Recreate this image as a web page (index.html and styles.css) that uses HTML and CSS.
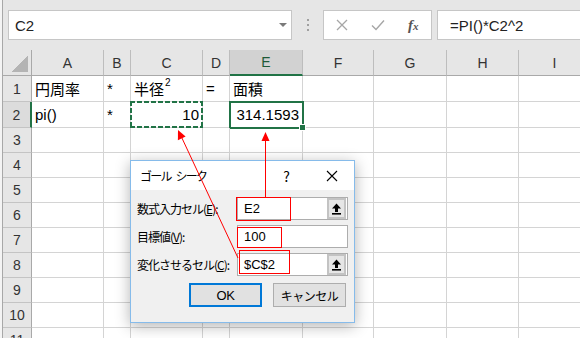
FILE: index.html
```html
<!DOCTYPE html>
<html lang="ja">
  <head>
    <meta charset="UTF-8" />
    <meta name="viewport" content="width=device-width, initial-scale=1.0" />
    <title>ゴール シーク</title>
    <link rel="stylesheet" href="styles.css">
  </head>

  <body>
    <div class="app">
      <div class="formula-bar">
        <div class="name-box"><span>C2</span><i class="drop"></i></div>
        <div class="grip"><b></b><b></b><b></b></div>
        <div class="fx-buttons">
          <span class="fx-btn">
            <svg width="12" height="12" viewBox="0 0 12 12"><path d="M1 1L11 11M11 1L1 11" stroke="#a6a6a6" stroke-width="1.3" fill="none" /></svg>
          </span>
          <span class="fx-btn">
            <svg width="14" height="12" viewBox="0 0 14 12"><path d="M1 6.5L5 10.5L13 1.5" stroke="#a6a6a6" stroke-width="1.4" fill="none" /></svg>
          </span>
          <span class="fx-btn fx"><i>f<small>x</small></i></span>
        </div>
        <div class="formula">=PI()*C2^2</div>
      </div>

      <div class="sheet">
        <div class="row head">
          <div class="corner"></div><div>A</div><div>B</div><div>C</div><div>D</div><div class="on">E</div><div>F</div><div>G</div><div>H</div><div>I</div>
        </div>
        <div class="row tall">
          <div class="rh">1</div><div>円周率</div><div>*</div><div>半径<sup>2</sup></div><div>=</div><div>面積</div><div></div><div></div><div></div><div></div>
        </div>
        <div class="row tall">
          <div class="rh on">2</div><div>pi()</div><div>*</div><div class="num copy">10</div><div></div><div class="num active">314.1593</div><div></div><div></div><div></div><div></div>
        </div>
        <div class="row"><div class="rh">3</div><div></div><div></div><div></div><div></div><div></div><div></div><div></div><div></div><div></div></div>
        <div class="row"><div class="rh">4</div><div></div><div></div><div></div><div></div><div></div><div></div><div></div><div></div><div></div></div>
        <div class="row"><div class="rh">5</div><div></div><div></div><div></div><div></div><div></div><div></div><div></div><div></div><div></div></div>
        <div class="row"><div class="rh">6</div><div></div><div></div><div></div><div></div><div></div><div></div><div></div><div></div><div></div></div>
        <div class="row"><div class="rh">7</div><div></div><div></div><div></div><div></div><div></div><div></div><div></div><div></div><div></div></div>
        <div class="row"><div class="rh">8</div><div></div><div></div><div></div><div></div><div></div><div></div><div></div><div></div><div></div></div>
        <div class="row"><div class="rh">9</div><div></div><div></div><div></div><div></div><div></div><div></div><div></div><div></div><div></div></div>
        <div class="row"><div class="rh">10</div><div></div><div></div><div></div><div></div><div></div><div></div><div></div><div></div><div></div></div>
        <div class="row"><div class="rh">11</div><div></div><div></div><div></div><div></div><div></div><div></div><div></div><div></div><div></div></div>
      </div>

      <div class="dialog">
        <div class="dialog-title">
          <span class="title-text">ゴール<span class="gap"></span>シーク</span>
          <span class="help">?</span>
          <span class="close">
            <svg width="12" height="12" viewBox="0 0 12 12"><path d="M1 1L11 11M11 1L1 11" stroke="#000" stroke-width="1.1" fill="none" /></svg>
          </span>
        </div>
        <div class="dialog-body">
          <div class="field">
            <label>数式入力セル(<u>E</u>):</label>
            <div class="box">E2
              <span class="pick">
                <svg width="11" height="12" viewBox="0 0 11 12"><path d="M5.5 0.5L10 5.5H7V9H4V5.5H1Z" /><rect x="1" y="10" width="9" height="1.6" /></svg>
              </span>
            </div>
          </div>
          <div class="field">
            <label>目標値(<u>V</u>):</label>
            <div class="box">100</div>
          </div>
          <div class="field">
            <label>変化させるセル(<u>C</u>):</label>
            <div class="box">$C$2
              <span class="pick">
                <svg width="11" height="12" viewBox="0 0 11 12"><path d="M5.5 0.5L10 5.5H7V9H4V5.5H1Z" /><rect x="1" y="10" width="9" height="1.6" /></svg>
              </span>
            </div>
          </div>
          <div class="buttons">
            <button class="ok">OK</button>
            <button>キャンセル</button>
          </div>
        </div>
      </div>

      <!-- red notes drawn over the sheet and dialog -->
      <svg class="marks" width="580" height="338" viewBox="0 0 580 338">
        <g fill="none" stroke="#f00" stroke-width="1">
          <rect x="236.5" y="197.5" width="54" height="23" />
          <rect x="237.5" y="227.5" width="44" height="20" />
          <rect x="239.5" y="250.5" width="50" height="23" />
          <line x1="265.5" y1="197" x2="265.5" y2="139" />
          <line x1="238" y1="258" x2="181" y2="136" />
        </g>
        <g fill="#f00">
          <polygon points="265.5,132 261.5,141 269.5,141" />
          <polygon points="178,130 185.6,136.4 177.9,140.2" />
        </g>
      </svg>
    </div>
  </body>
</html>
```

FILE: styles.css
```css
* {
  box-sizing: border-box;
}

body {
  margin: 0;
  background: #fff;
  font-family: "Liberation Sans", "Noto Sans CJK JP", sans-serif;
  overflow: hidden;
}

.app {
  position: relative;
  width: 580px;
  height: 338px;
  overflow: hidden;
  padding-left: 3px;
  background: linear-gradient(90deg, #f4f4f4 0 2px, #a8a8a8 2px 3px, #fff 3px);
}

/* formula bar */
.formula-bar {
  display: flex;
  align-items: center;
  height: 50px;
  padding-left: 5px;
  background: #e6e6e6;
}

.name-box {
  display: flex;
  align-items: center;
  justify-content: space-between;
  width: 284px;
  height: 30px;
  padding: 0 4px 0 6px;
  background: #fff;
  border: 1px solid #c6c6c6;
  font-size: 15px;
  color: #222;
}

.drop {
  border-left: 4px solid transparent;
  border-right: 4px solid transparent;
  border-top: 4px solid #7a7a7a;
}

.grip {
  display: flex;
  flex-direction: column;
  align-items: center;
  gap: 3px;
  width: 31px;
}

.grip b {
  width: 2px;
  height: 2px;
  background: #a0a0a0;
}

.fx-buttons {
  display: flex;
  align-items: center;
  width: 109px;
  height: 30px;
  background: #fff;
  border: 1px solid #c6c6c6;
}

.fx-btn {
  display: flex;
  align-items: center;
  justify-content: center;
  width: 36px;
}

.fx {
  font-family: "Liberation Serif", serif;
  font-size: 15px;
  font-weight: bold;
  color: #555;
}

.fx small {
  font-size: 11px;
}

.formula {
  display: flex;
  align-items: center;
  flex: 1;
  height: 30px;
  margin-left: 5px;
  padding-left: 12px;
  background: #fff;
  border: 1px solid #c6c6c6;
  border-right: none;
  font-size: 15px;
  color: #222;
}

/* sheet */
.row {
  display: grid;
  grid-template-columns: 29px 72px 27px 72px 27px 73px 71px 73px 72px 72px;
  height: 25px;
}

.row.tall,
.row.head {
  height: 26px;
}

.row > div {
  position: relative;
  display: flex;
  align-items: center;
  padding: 0 3px;
  border-right: 1px solid #d4d4d4;
  border-bottom: 1px solid #d4d4d4;
  font-size: 15px;
  white-space: nowrap;
}

.head > div {
  justify-content: center;
  background: #e6e6e6;
  border-right-color: #bdbdbd;
  border-bottom-color: #a9a9a9;
  font-size: 14px;
  color: #333;
}

.head > .on {
  background: #d2d2d2;
  border-bottom: 2px solid #217346;
  color: #1e5a38;
}

.head > .corner {
  border-right-color: #a9a9a9;
  background: #e6e6e6 linear-gradient(to bottom right, transparent 50%, #b4b4b4 50%) no-repeat right 3px bottom 3px / 17px 16px;
}

.row > .rh {
  justify-content: center;
  background: #e6e6e6;
  border-right-color: #a9a9a9;
  border-bottom-color: #c4c4c4;
  font-size: 14px;
  color: #333;
}

.row > .rh.on {
  background: #dcdcdc;
  border-right: 2px solid #217346;
}

.row > .num {
  justify-content: flex-end;
}

sup {
  font-size: 10px;
  align-self: flex-start;
  margin-top: 1px;
  margin-left: 1px;
}

.active::after {
  content: "";
  position: absolute;
  inset: -1px -2px -2px -1px;
  border: 2px solid #217346;
}

.active::before {
  content: "";
  position: absolute;
  right: -4px;
  bottom: -4px;
  width: 5px;
  height: 5px;
  background: #217346;
  border: 1px solid #fff;
  box-sizing: content-box;
  z-index: 1;
}

.copy::after {
  content: "";
  position: absolute;
  inset: -1px -1px -1px -1px;
  background:
    repeating-linear-gradient(90deg, #217346 0 5px, transparent 5px 7px) top left / 100% 2px no-repeat,
    repeating-linear-gradient(90deg, #217346 0 5px, transparent 5px 7px) bottom left / 100% 2px no-repeat,
    repeating-linear-gradient(180deg, #217346 0 5px, transparent 5px 7px) top left / 2px 100% no-repeat,
    repeating-linear-gradient(180deg, #217346 0 5px, transparent 5px 7px) top right / 2px 100% no-repeat;
}

/* goal seek dialog */
.dialog {
  position: absolute;
  left: 130px;
  top: 160px;
  width: 225px;
  height: 163px;
  background: #f0f0f0;
  border: 1px solid #86bbea;
  box-shadow: 0 3px 14px rgba(0, 0, 0, 0.3);
  font-family: "Noto Sans CJK JP", sans-serif;
  font-size: 12px;
  color: #000;
}

.dialog-title {
  display: flex;
  align-items: center;
  height: 29px;
  padding-left: 9px;
  background: #fff;
}

.title-text {
  display: flex;
  letter-spacing: -1.8px;
}

.title-text .gap {
  width: 5px;
}

.help {
  width: 45px;
  margin-left: auto;
  text-align: center;
  font-size: 14px;
}

.close {
  display: flex;
  justify-content: center;
  width: 45px;
}

.dialog-body {
  padding: 7px 6px 0 6px;
}

.field {
  display: flex;
  align-items: center;
  height: 23px;
  margin-bottom: 5px;
}

.field label {
  width: 100px;
  letter-spacing: -1px;
  white-space: nowrap;
}

.box {
  display: flex;
  align-items: center;
  width: 111px;
  height: 23px;
  padding-left: 6px;
  background: #fff;
  border: 1px solid #adadad;
  font-family: "Liberation Sans", sans-serif;
  font-size: 13px;
}

.pick {
  display: flex;
  align-items: center;
  justify-content: center;
  width: 19px;
  height: 21px;
  margin-left: auto;
  margin-right: 1px;
  background: #e6e6e6;
  border: 2px solid #c3c3c3;
}

.buttons {
  display: flex;
  justify-content: flex-end;
  gap: 11px;
  margin-top: 7px;
  padding-right: 2px;
}

.buttons button {
  width: 73px;
  height: 24px;
  padding: 0;
  background: #e1e1e1;
  border: 1px solid #adadad;
  font-family: "Noto Sans CJK JP", sans-serif;
  font-size: 12px;
  letter-spacing: -0.5px;
  color: #000;
}

.buttons .ok {
  border: 2px solid #0078d7;
  font-family: "Liberation Sans", sans-serif;
  font-size: 13px;
}

.marks {
  position: absolute;
  left: 0;
  top: 0;
  pointer-events: none;
}
```
